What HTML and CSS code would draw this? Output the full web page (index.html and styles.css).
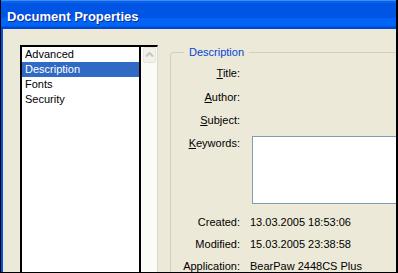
FILE: index.html
```html
<!DOCTYPE html>
<html lang="en">
<head>
    <meta charset="UTF-8">
    <meta name="viewport" content="width=device-width, initial-scale=1.0">
    <title>Document Properties</title>
    <link rel="stylesheet" href="styles.css">
</head>
<body>
    <div class="window">
        <div class="titlebar">Document Properties</div>
        <div class="client">
            <div class="listbox">
                <ul class="list">
                    <li>Advanced</li>
                    <li class="selected">Description</li>
                    <li>Fonts</li>
                    <li>Security</li>
                </ul>
                <div class="scrollbar">
                    <div class="scroll-up">
                        <svg width="11" height="14" viewBox="0 0 11 14">
                            <polyline points="2,8.5 5.5,5 9,8.5" fill="none" stroke="#c9c7ba" stroke-width="2"/>
                        </svg>
                    </div>
                </div>
            </div>
            <fieldset class="group">
                <legend>Description</legend>
                <div class="props">
                    <label><u>T</u>itle:</label><span></span>
                    <label><u>A</u>uthor:</label><span></span>
                    <label><u>S</u>ubject:</label><span></span>
                    <label><u>K</u>eywords:</label><span><div class="keywords"></div></span>
                    <label>Created:</label><span>13.03.2005 18:53:06</span>
                    <label>Modified:</label><span>15.03.2005 23:38:58</span>
                    <label>Application:</label><span>BearPaw 2448CS Plus</span>
                </div>
            </fieldset>
        </div>
    </div>
</body>
</html>
```

FILE: styles.css
```css
body {
    margin: 0;
    font-family: "Liberation Sans", Arial, sans-serif;
    font-size: 11px;
    color: #000000;
}

.window {
    width: 398px;
    height: 273px;
    box-sizing: border-box;
    border-left: 1px solid #000000;
    border-right: 2px solid #000000;
    border-bottom: 1px solid #000000;
    display: flex;
    flex-direction: column;
    overflow: hidden;
}

.titlebar {
    height: 29px;
    box-sizing: border-box;
    padding: 9px 0 0 6px;
    line-height: 15px;
    font-size: 13px;
    font-weight: bold;
    color: #ffffff;
    text-shadow: 1px 1px 0 #0a2a96;
    background: linear-gradient(to bottom,
        #3d8ff7 0px, #3d8ff7 1px,
        #0a62ea 1px, #0a62ea 3px,
        #0055e5 3px, #0055e5 18px,
        #0064f6 18px, #0066f8 26px,
        #0048d2 27px, #0046cc 29px);
}

.client {
    flex: 1;
    min-height: 0;
    display: flex;
    align-items: flex-start;
    padding: 16px 0 0 17px;
    background-color: #ece9d8;
    border-left: 2px solid #0055e5;
    overflow: hidden;
}

.listbox {
    flex: none;
    display: flex;
    height: 300px;
    border-top: 2px solid #000000;
    border-left: 2px solid #000000;
    border-right: 1px solid #dcdad0;
}

.list {
    width: 117px;
    margin: 0;
    padding: 0;
    list-style: none;
    background-color: #ffffff;
    border-right: 2px solid #000000;
}

.list li {
    height: 15px;
    line-height: 15px;
    padding-left: 3px;
}

.list li.selected {
    background-color: #316ac5;
    color: #ffffff;
}

.scrollbar {
    width: 16px;
    background-color: #fbfbf8;
}

.scroll-up {
    width: 11px;
    height: 14px;
    margin-left: 2px;
    border: 1px solid #e8e6dc;
    border-radius: 2px;
    background-color: #f3f2ea;
}

.scroll-up svg {
    display: block;
}

.group {
    flex: none;
    width: 260px;
    height: 300px;
    box-sizing: border-box;
    margin: 1px 0 0 12px;
    padding: 0;
    border: 1px solid #d0d0bf;
    border-radius: 3px;
}

.group legend {
    margin-left: 13px;
    padding: 0 5px;
    line-height: 13px;
    color: #0046d5;
}

.props {
    display: grid;
    grid-template-columns: 69px 1fr;
    grid-template-rows: 24px 23px 23px 79px 22px 22px 22px;
    column-gap: 10px;
    margin-top: 8px;
    line-height: 13px;
}

.props label {
    text-align: right;
}

.keywords {
    height: 66px;
    margin: -1px 0 0 2px;
    background-color: #ffffff;
    border: 1px solid #7f9db9;
}
```
